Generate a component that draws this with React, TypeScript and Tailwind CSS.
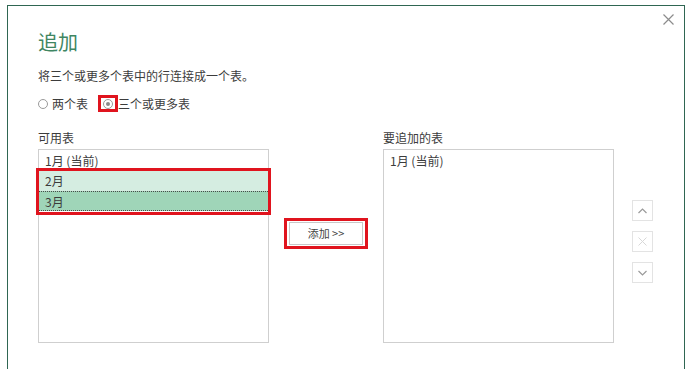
const rowBase = 'h-[20px] pl-[6px] text-[12px] leading-[20px]'

function Radio({ checked }: { checked?: boolean }) {
  return (
    <span className="flex h-[10px] w-[10px] items-center justify-center rounded-full border border-[#9a9a9a] bg-white">
      {checked && <span className="h-[4px] w-[4px] rounded-full bg-[#8a8a8a]" />}
    </span>
  )
}

function SideButton({ children }: { children: React.ReactNode }) {
  return (
    <div className="flex h-[21px] w-[21px] items-center justify-center border border-[#e3e3e3] bg-white">
      {children}
    </div>
  )
}

export default function App() {
  return (
    <div className="h-[369px] w-[693px] overflow-hidden bg-white font-['Noto_Sans_CJK_SC','Noto_Sans',sans-serif] text-[#3c3c3c]">
      <div className="relative ml-[7px] mt-[5px] h-[400px] w-[678px] border border-[#2f6652] pl-[30px] pt-[26px]">
        {/* close */}
        <svg className="absolute left-[655px] top-[8px]" width="11" height="11" viewBox="0 0 11 11">
          <path d="M0.5 0.5L10.5 10.5M10.5 0.5L0.5 10.5" stroke="#8c8c8c" strokeWidth="1.2" />
        </svg>

        <h1 className="text-[20px] leading-[20px] text-[#3f8662]">追加</h1>
        <p className="mt-[16px] text-[12px] leading-[16px]">将三个或更多个表中的行连接成一个表。</p>

        {/* mode */}
        <div className="mt-[12px] flex items-center text-[12px] leading-[16px]">
          <Radio />
          <span className="ml-[4px]">两个表</span>
          <span className="relative ml-[15px] flex items-center">
            <Radio checked />
            <span className="absolute left-[-5px] top-[-4px] h-[17px] w-[20px] border-[3px] border-[#e0141e]" />
          </span>
          <span className="ml-[5px]">三个或更多表</span>
        </div>

        <div className="mt-[18px] flex">
          {/* available */}
          <div className="w-[231px]">
            <div className="text-[12px] leading-[16px]">可用表</div>
            <div className="relative mt-[3px] h-[194px] border border-[#cfcfcf] pt-[1px]">
              <div className={rowBase}>1月 (当前)</div>
              <div className={`${rowBase} bg-[#d5ede1]`}>2月</div>
              <div className={`${rowBase} border-y border-dotted border-[#4a4a4a] bg-[#9fd5b8] leading-[18px]`}>3月</div>
              <span className="absolute left-[-3px] top-[18px] h-[47px] w-[235px] border-[3px] border-[#e0141e]" />
            </div>
          </div>

          {/* add */}
          <div className="flex w-[114px] justify-center">
            <div className="relative mt-[92px] h-[23px] w-[74px]">
              <button className="flex h-full w-full items-center justify-center border border-[#c8c8c8] bg-white text-[11px] text-[#444]">
                添加 &gt;&gt;
              </button>
              <span className="absolute left-[-5px] top-[-4px] h-[31px] w-[84px] border-[3px] border-[#e0141e]" />
            </div>
          </div>

          {/* to append */}
          <div className="w-[231px]">
            <div className="text-[12px] leading-[16px]">要追加的表</div>
            <div className="mt-[3px] h-[194px] border border-[#cfcfcf] pt-[1px]">
              <div className={rowBase}>1月 (当前)</div>
            </div>
          </div>

          {/* order */}
          <div className="ml-[18px] mt-[70px] flex flex-col gap-[10px]">
            <SideButton>
              <svg width="9" height="6" viewBox="0 0 9 6">
                <path d="M0.5 5L4.5 1L8.5 5" fill="none" stroke="#9a9a9a" strokeWidth="1.2" />
              </svg>
            </SideButton>
            <SideButton>
              <svg width="9" height="9" viewBox="0 0 9 9">
                <path d="M0.5 0.5L8.5 8.5M8.5 0.5L0.5 8.5" stroke="#d8d8d8" strokeWidth="1" />
              </svg>
            </SideButton>
            <SideButton>
              <svg width="9" height="6" viewBox="0 0 9 6">
                <path d="M0.5 1L4.5 5L8.5 1" fill="none" stroke="#9a9a9a" strokeWidth="1.2" />
              </svg>
            </SideButton>
          </div>
        </div>
      </div>
    </div>
  )
}
